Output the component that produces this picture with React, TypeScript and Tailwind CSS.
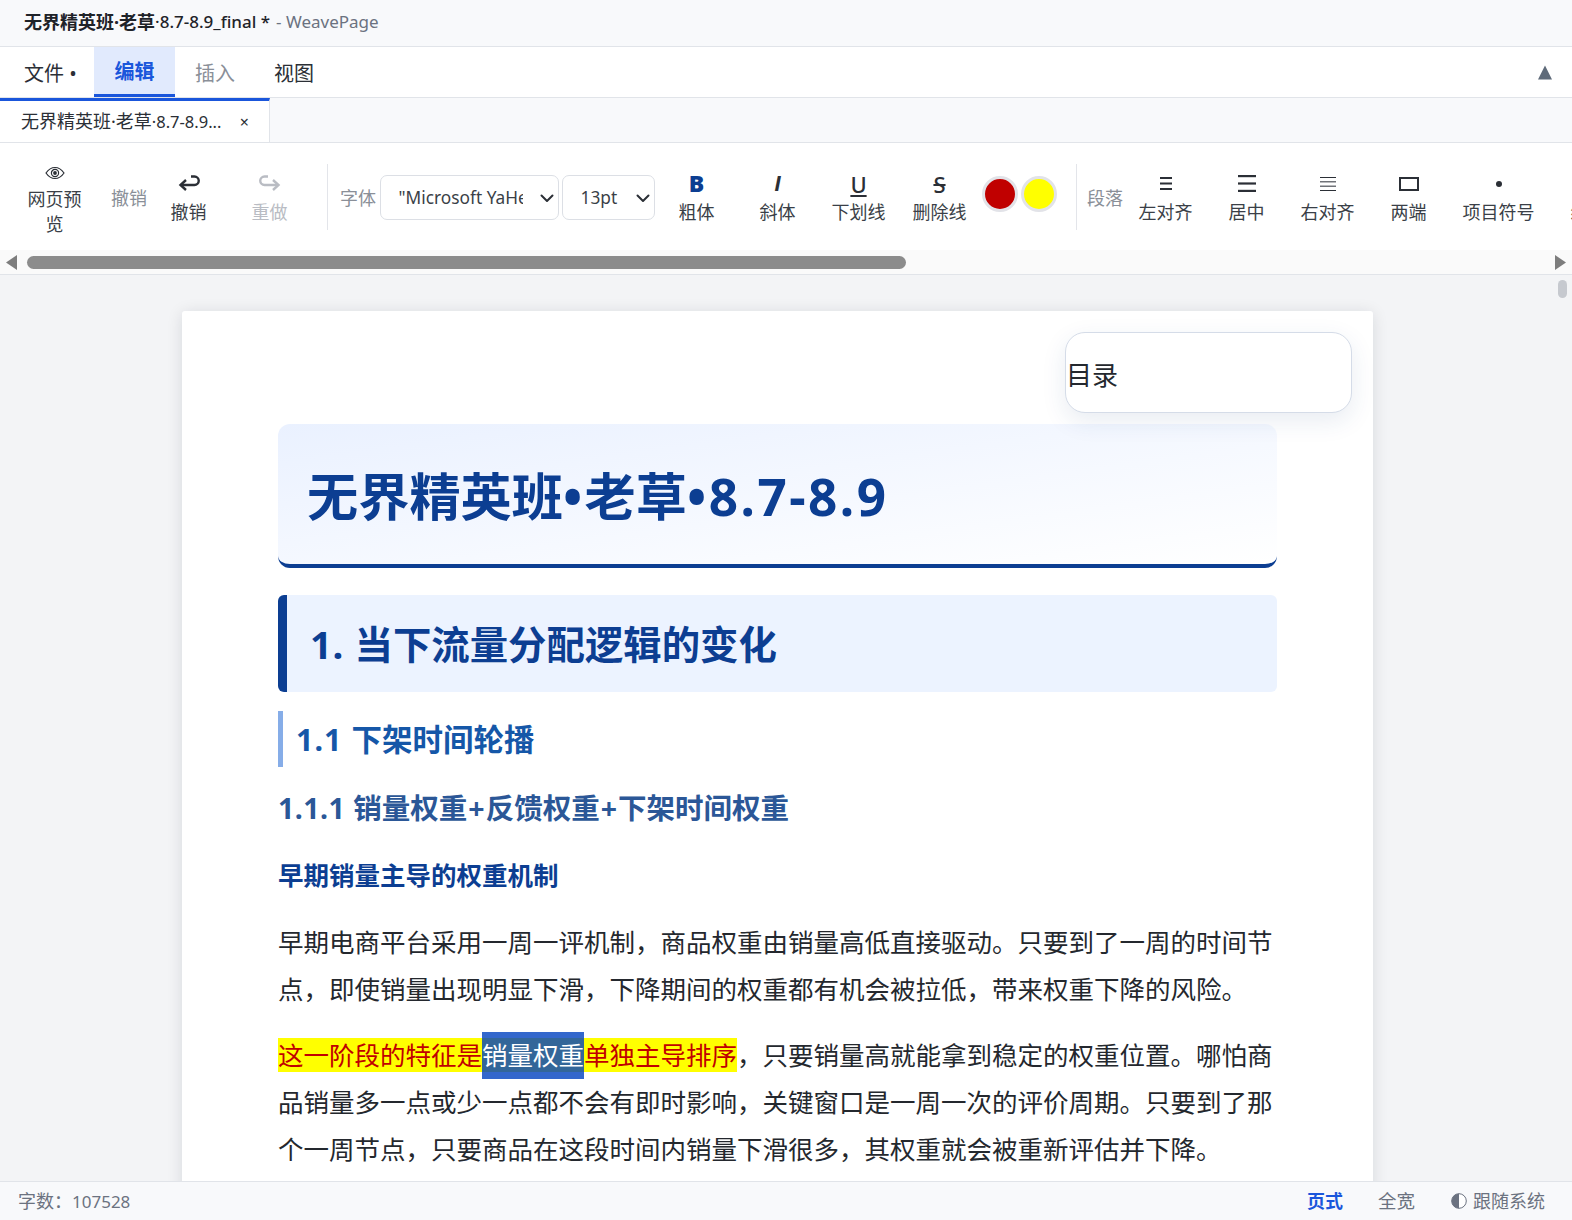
import React from "react";

const FONT = "font-['Noto_Sans','Noto_Sans_CJK_SC',sans-serif]";

function Btn({ icon, label, w = "w-[81px]", dim = false }: { icon: React.ReactNode; label: string; w?: string; dim?: boolean }) {
  return (
    <div className={`${w} shrink-0 flex flex-col items-center text-center pt-[6px]`}>
      <div className="h-[27px] flex items-center justify-center">{icon}</div>
      <div className={`mt-[2px] text-[18px] leading-[27px] whitespace-nowrap ${dim ? "text-[#b9bcc3]" : "text-[#3a3f47]"}`}>{label}</div>
    </div>
  );
}

function Lines({ w, h, sw, n = 3 }: { w: number; h: number; sw: number; n?: number }) {
  const step = (h - sw) / (n - 1);
  return (
    <svg width={w} height={h} viewBox={`0 0 ${w} ${h}`}>
      {Array.from({ length: n }).map((_, i) => (
        <rect key={i} x="0" y={i * step} width={w} height={sw} fill="#2b2f36" />
      ))}
    </svg>
  );
}

const Undo = ({ color }: { color: string }) => (
  <svg width="22" height="20" viewBox="0 0 22 20" fill="none" stroke={color} strokeWidth="2.4">
    <path d="M13 2.500h3.500a3.800 3.800 0 0 1 0 8.500H3" />
    <path d="M8 6 2.500 11 8 16" />
  </svg>
);

const Redo = ({ color }: { color: string }) => (
  <svg width="22" height="20" viewBox="0 0 22 20" fill="none" stroke={color} strokeWidth="2.4">
    <path d="M9 2.500H5.500a3.800 3.800 0 0 0 0 8.500H19" />
    <path d="M14 6l5.500 5L14 16" />
  </svg>
);

const Eye = () => (
  <svg width="20" height="14" viewBox="0 0 20 14" fill="none" stroke="#2b2f36">
    <path d="M1 7c2.500-3.600 5.500-5.500 9-5.500S16.500 3.400 19 7c-2.500 3.600-5.500 5.500-9 5.500S3.500 10.600 1 7Z" strokeWidth="1.200" />
    <circle cx="10" cy="7" r="3.600" strokeWidth="1.200" />
    <circle cx="10" cy="7" r="1.900" fill="#2b2f36" stroke="none" />
  </svg>
);

function Select({ text, w, inner }: { text: string; w: string; inner: string }) {
  return (
    <div className={`${w} h-[45px] shrink-0 rounded-[7px] border border-[#dcdfe5] bg-white flex items-center justify-between pl-[18px] pr-[2px] text-[17.300px] text-[#3a3f47]`}>
      <span className={`${inner} overflow-hidden whitespace-nowrap`}>{text}</span>
      <svg width="18" height="18" viewBox="0 0 18 18" fill="none" stroke="#2b2f36" strokeWidth="2" strokeLinecap="round" strokeLinejoin="round">
        <path d="M3.500 6.500 9 12l5.500-5.500" />
      </svg>
    </div>
  );
}

const Divider = ({ cls }: { cls: string }) => <div className={`w-px h-[66px] bg-[#e3e5ea] shrink-0 ${cls}`} />;

export default function App() {
  return (
    <div className={`${FONT} w-full h-screen flex flex-col overflow-hidden bg-[#f3f4f6] text-[#1f2329]`}>
      {/* title bar */}
      <div className="h-[47px] shrink-0 bg-[#f8f9fb] border-b border-[#e1e4e9] flex items-center pb-[2px] pl-[24px] text-[18px]">
        <span className="font-bold text-[#1f2329]">无界精英班·老草</span>
        <span className="text-[#1f2329] font-medium text-[17px]">·8.7-8.9_final *</span>
        <span className="text-[#6b7280] ml-[6px] text-[17px]">- WeavePage</span>
      </div>

      {/* menu */}
      <div className="h-[51px] shrink-0 bg-white border-b border-[#e1e4e9] flex items-stretch text-[20px] relative">
        <div className="w-[94px] pl-[24px] pt-[3px] flex items-center text-[#2b2f36]">文件 •</div>
        <div className="w-[81px] pt-[3px] flex items-center justify-center bg-[#e1eafd] border-b-[3px] border-[#1a56db] text-[#1a56db] font-bold">编辑</div>
        <div className="w-[80px] pt-[3px] flex items-center justify-center text-[#8a8f98]">插入</div>
        <div className="w-[78px] pt-[3px] flex items-center justify-center text-[#2b2f36]">视图</div>
        <div className="ml-auto pr-[19px] flex items-center">
          <svg width="16" height="15" viewBox="0 0 16 15"><path d="M8 0.500 15 14.500H1Z" fill="#5f6b7a" /></svg>
        </div>
      </div>

      {/* doc tabs */}
      <div className="h-[45px] shrink-0 bg-[#f8f9fb] border-b border-[#e1e4e9] flex">
        <div className="w-[270px] bg-white border-t-[3px] border-t-[#1a56db] border-r border-r-[#e1e4e9] pl-[21px] pr-[20px] flex items-center justify-between text-[18px] text-[#2b2f36]">
          <span className="whitespace-nowrap">无界精英班·老草<span className="text-[16.500px]">·8.7-8.9...</span></span>
          <span className="text-[16px] leading-none">×</span>
        </div>
      </div>

      {/* toolbar */}
      <div className="h-[107px] shrink-0 bg-white flex items-start pt-[21px] pl-[14px] overflow-hidden">
        <div className="w-[81px] shrink-0 flex flex-col items-center text-center">
          <div className="h-[18px] flex items-center justify-center"><Eye /></div>
          <div className="text-[18px] leading-[25px] text-[#3a3f47] w-[60px] mt-[5px]">网页预览</div>
        </div>
        <div className="ml-[16px] mt-[21px] w-[37px] shrink-0 text-[18px] leading-[27px] text-[#8a8f98] whitespace-nowrap">撤销</div>
        <Btn icon={<Undo color="#2b2f36" />} label="撤销" />
        <Btn icon={<Redo color="#b9bcc3" />} label="重做" dim />
        <Divider cls="ml-[17px] mr-[12px]" />
        <div className="w-[39.500px] shrink-0 mt-[21px] text-[18px] leading-[27px] text-[#8a8f98] whitespace-nowrap">字体</div>
        <div className="flex gap-[3px] mt-[11px] shrink-0">
          <Select text={'"Microsoft YaHei"'} w="w-[179px]" inner="w-[124px]" />
          <Select text="13pt" w="w-[93px]" inner="w-[50px]" />
        </div>
        <div className="ml-[1.500px] flex shrink-0">
          <Btn icon={<span className="text-[23px] font-black text-[#0c3e92] leading-none">B</span>} label="粗体" />
          <Btn icon={<span className="font-['Liberation_Sans',sans-serif] text-[22px] italic font-bold text-[#2b2f36] leading-none">I</span>} label="斜体" />
          <Btn icon={<span className="text-[22px] font-medium underline underline-offset-[2px] decoration-2 text-[#2b2f36] leading-none">U</span>} label="下划线" />
          <Btn icon={<span className="text-[22px] font-medium line-through text-[#2b2f36] leading-none">S</span>} label="删除线" />
        </div>
        <div className="flex gap-[3px] mt-[12px] ml-[2px] shrink-0">
          <div className="w-[36px] h-[36px] rounded-full bg-[#c00000] border-[3px] border-[#e2e3e8]" />
          <div className="w-[36px] h-[36px] rounded-full bg-[#ffff00] border-[3px] border-[#e2e3e8]" />
        </div>
        <Divider cls="ml-[19px] mr-[10px]" />
        <div className="w-[37px] shrink-0 mt-[21px] text-[18px] leading-[27px] text-[#8a8f98] whitespace-nowrap">段落</div>
        <div className="ml-[1px] flex shrink-0">
          <Btn icon={<Lines w={12} h={13} sw={2} />} label="左对齐" />
          <Btn icon={<Lines w={18} h={17} sw={2.200} />} label="居中" />
          <Btn icon={<Lines w={16} h={14} sw={1} n={4} />} label="右对齐" />
          <Btn icon={<div className="w-[20px] h-[14px] border-2 border-[#2b2f36]" />} label="两端" />
          <Btn icon={<div className="w-[6px] h-[6px] rounded-full bg-[#2b2f36]" />} label="项目符号" w="w-[99px]" />
          <Btn icon={<span />} label="编号" w="w-[81px]" />
        </div>
      </div>

      {/* toolbar scrollbar */}
      <div className="h-[25px] shrink-0 bg-[#fafafa] border-b border-[#e1e4e9] flex items-center">
        <svg className="ml-[6px] shrink-0" width="11" height="15" viewBox="0 0 11 15"><path d="M11 0v15L0 7.500Z" fill="#7d7d7d" /></svg>
        <div className="ml-[10px] w-[879px] h-[13px] rounded-full bg-[#8c8c8c] shrink-0" />
        <svg className="ml-auto mr-[6px] shrink-0" width="11" height="15" viewBox="0 0 11 15"><path d="M0 0v15l11-7.500Z" fill="#7d7d7d" /></svg>
      </div>

      {/* main */}
      <div className="flex-1 min-h-0 relative overflow-hidden pt-[36px]">
        <div className="absolute right-[5px] top-[5px] w-[9px] h-[18px] rounded-full bg-[#c6c9cf]" />
        <div className="relative ml-[182px] w-[1191px] h-[1000px] bg-white rounded-t-[3px] shadow-[0_2px_16px_rgba(15,23,42,0.12)] pt-[113px] px-[96px] text-[25.500px] leading-[47px] text-[#24282e]">
          <div className="absolute top-[21px] right-[21px] w-[287px] h-[81px] rounded-[20px] border border-[#d5dce8] bg-white shadow-[0_8px_24px_rgba(30,64,130,0.10)] flex items-center pt-[6px] text-[26px] z-10">
            目录
          </div>

          <div className="h-[144px] rounded-[12px] border-b-[4px] border-[#0c3e92] bg-gradient-to-br from-[#eaf1ff] to-white pl-[29px] pt-[4px] flex items-center">
            <h1 className="text-[51.200px] leading-[60px] font-bold text-[#0c3e92] whitespace-nowrap">无界精英班<span className="tracking-[2.400px]">•</span>老草<span className="tracking-[2.500px]">•8.7-8.9</span></h1>
          </div>

          <div className="mt-[27px] h-[97px] rounded-[6px] border-l-[9px] border-[#0c3e92] bg-[#ecf3ff] pl-[23px] flex items-center">
            <h2 className="text-[38.400px] leading-[50px] font-bold text-[#0c3e92] whitespace-nowrap"><span className="tracking-[0.600px]">1. </span>当下流量分配逻辑的变化</h2>
          </div>

          <div className="mt-[19px] h-[56px] border-l-[5px] border-[#86ade8] pl-[13px] flex items-center">
            <h3 className="text-[30.500px] leading-[40px] font-bold text-[#1557a8] whitespace-nowrap"><span className="tracking-[1px]">1.1 </span>下架时间轮播</h3>
          </div>

          <h4 className="mt-[21px] text-[28.500px] leading-[40px] font-bold text-[#2b5797] whitespace-nowrap"><span className="tracking-[0.500px]">1.1.1 </span>销量权重<span className="mx-[1px]">+</span>反馈权重<span className="mx-[1px]">+</span>下架时间权重</h4>

          <h5 className="mt-[27px] text-[25.500px] leading-[40px] font-bold text-[#0c3e92] whitespace-nowrap">早期销量主导的权重机制</h5>

          <p className="mt-[24px] w-[999px]">早期电商平台采用一周一评机制，商品权重由销量高低直接驱动。只要到了一周的时间节点，即使销量出现明显下滑，下降期间的权重都有机会被拉低，带来权重下降的风险。</p>

          <p className="mt-[19px] w-[999px]">
            <span className="bg-[#ffff00] text-[#c00000]">这一阶段的特征是</span>
            <span className="inline-block align-top h-[47px] bg-[#3367cc] text-white">
              <span className="bg-[#336699]">销量权重</span>
            </span>
            <span className="bg-[#ffff00] text-[#c00000]">单独主导排序</span>
            ，只要销量高就能拿到稳定的权重位置。哪怕商品销量多一点或少一点都不会有即时影响，关键窗口是一周一次的评价周期。只要到了那个一周节点，只要商品在这段时间内销量下滑很多，其权重就会被重新评估并下降。
          </p>
        </div>
      </div>

      {/* status bar */}
      <div className="h-[39px] shrink-0 bg-[#f8f9fb] border-t border-[#e1e4e9] flex items-center pl-[18px] pr-[27px] text-[18px] text-[#6b7280]">
        <span>字数：<span className="text-[17px]">107528</span></span>
        <span className="ml-auto font-bold text-[#1a56db]">页式</span>
        <span className="ml-[35px] text-[18.500px]">全宽</span>
        <span className="ml-[36px] flex items-center gap-[6px]">
          <svg width="16" height="16" viewBox="0 0 16 16"><circle cx="8" cy="8" r="7.300" fill="#fff" stroke="#6b7280" /><path d="M8 .700a7.300 7.300 0 0 0 0 14.600Z" fill="#6b7280" /></svg>
          跟随系统
        </span>
      </div>
    </div>
  );
}
